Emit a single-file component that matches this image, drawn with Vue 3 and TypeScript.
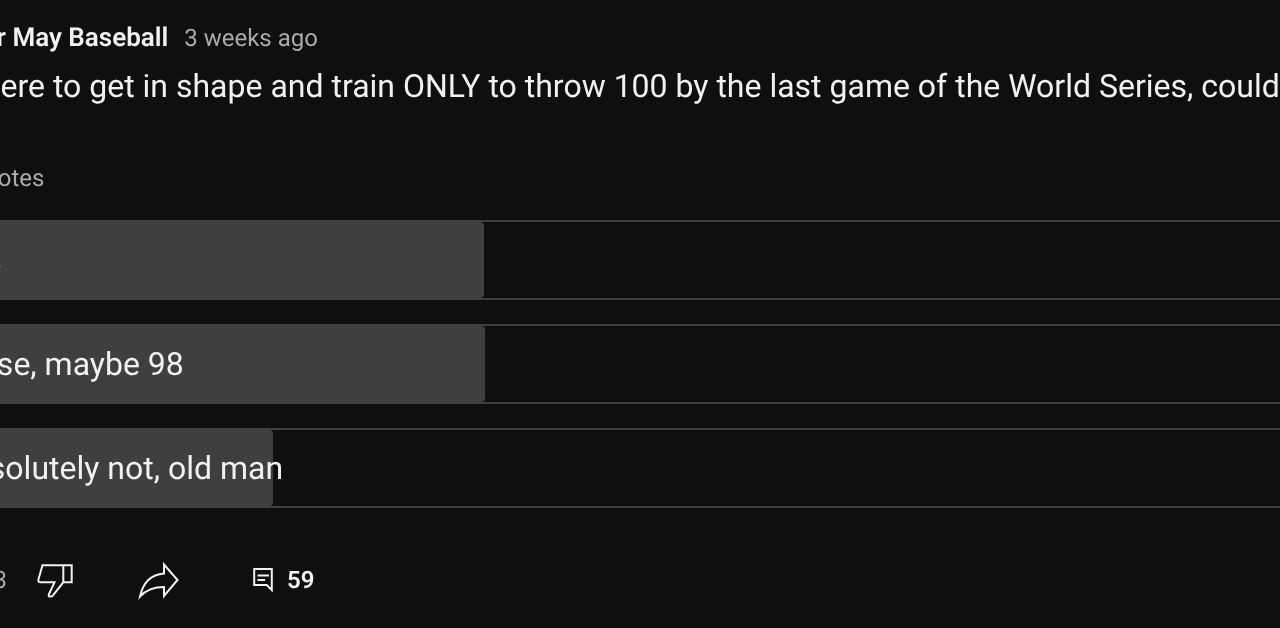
<script setup lang="ts">
interface Option { label: string; width: number }
const options: Option[] = [
  { label: 'Yes', width: 553 },
  { label: 'Close, maybe 98', width: 554 },
  { label: 'Absolutely not, old man', width: 342 },
]
</script>

<template>
  <main class="post">
    <header class="meta">
      <span class="author">Trevor May Baseball</span>
      <span class="time">3 weeks ago</span>
    </header>
    <p class="body">If I were to get in shape and train ONLY to throw 100 by the last game of the World Series, could I do it?</p>
    <p class="votes">1.2K votes</p>
    <ul class="poll">
      <li v-for="o in options" :key="o.label" class="option">
        <div class="bar" :style="{ width: o.width + 'px' }"></div>
        <span class="label">{{ o.label }}</span>
      </li>
    </ul>
    <footer class="toolbar">
      <span class="count">3</span>
      <svg class="thumb" width="40" height="40" viewBox="0 0 40 40" fill="none" stroke="#f1f1f1" stroke-width="2">
        <path d="M28.3 5.3V22.3M36.7 5.3H7.5L3.4 19.5Q2.9 22.3 5.5 22.3H19.5L13.8 34.5Q13 36.5 15.5 36.5Q17 36.5 18 35.3L28.3 22.3H36.7Z" />
      </svg>
      <svg class="share" width="44" height="40" viewBox="0 0 44 40" fill="none" stroke="#f1f1f1" stroke-width="2">
        <path d="M27 4.5V13.5C14 14.5 6 23 3 36.5C9 30 17 27 27 27V36L40.5 20Z" />
      </svg>
      <svg class="comment" width="24" height="28" viewBox="0 0 24 28" fill="none" stroke="#f1f1f1" stroke-width="2">
        <path d="M3.2 3H20.8V24L15.8 19H3.2Z" /><path d="M6.5 9.5H18M6.5 14H14" />
      </svg>
      <span class="comments">59</span>
    </footer>
  </main>
</template>

<style scoped>
.post {
  width: 1500px;
  margin-left: -69px;
  box-sizing: border-box;
  padding-top: 22px;
  font-family: Roboto, "Liberation Sans", sans-serif;
  color: #f1f1f1;
  text-rendering: geometricPrecision;
  will-change: transform;
}
.meta {
  display: flex;
  align-items: center;
  gap: 16px;
  height: 32px;
  white-space: nowrap;
  font-size: 24px;
}
.author { font-size: 26px; font-weight: 600; }
.time { color: #aaa; }
.body {
  margin: 16px 0 0 1px;
  height: 32px;
  line-height: 32px;
  font-size: 32px;
  white-space: nowrap;
}
.votes {
  margin: 0 0 0 1px;
  padding-top: 60px;
  height: 32px;
  line-height: 32px;
  font-size: 24px;
  color: #aaa;
}
.poll {
  list-style: none;
  margin: 0;
  padding: 26px 0 0;
  display: flex;
  flex-direction: column;
  gap: 24px;
}
.option {
  position: relative;
  box-sizing: border-box;
  height: 80px;
  display: flex;
  align-items: center;
  padding-left: 19px;
  border-top: 2px solid #3f3f3f;
  border-bottom: 2px solid #3f3f3f;
  font-size: 32px;
  white-space: nowrap;
}
.bar {
  position: absolute;
  left: 0;
  top: 0;
  bottom: 0;
  background: #3f3f3f;
  border-radius: 0 4px 4px 0;
}
.label { position: relative; }
.toolbar {
  display: flex;
  align-items: center;
  height: 40px;
  margin-top: 52px;
  padding-left: 49px;
}
.count { width: 27px; margin-right: 28px; font-size: 24px; color: #aaa; text-align: right; }
.thumb { flex: none; }
.share { flex: none; margin-left: 62px; }
.comment { flex: none; margin-left: 70px; }
.comments { margin-left: 12px; font-size: 24px; font-weight: 600; }
</style>

<style>
html, body { margin: 0; background: #0f0f0f; overflow: hidden; }
</style>
